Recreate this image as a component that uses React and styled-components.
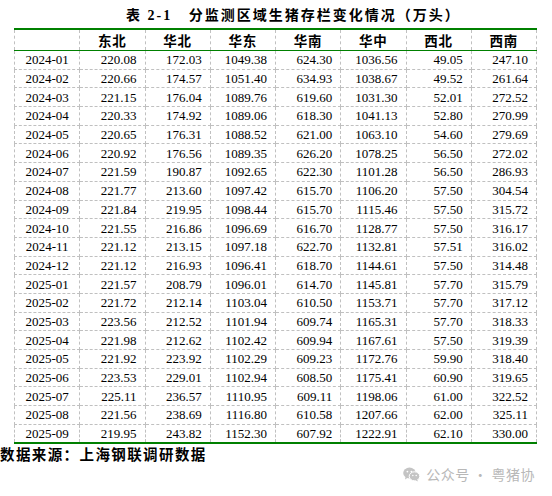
import React from 'react';
import styled, {createGlobalStyle} from 'styled-components';

const GlobalStyle = createGlobalStyle`
  html, body {
    margin: 0;
    padding: 0;
    background: #fff;
  }
  body {
    font-family: "Liberation Serif", "Noto Sans CJK SC", serif;
    color: #000;
  }
`;

const REGIONS = ['东北', '华北', '华东', '华南', '华中', '西北', '西南'];

const ROWS = [
  ['2024-01', '220.08', '172.03', '1049.38', '624.30', '1036.56', '49.05', '247.10'],
  ['2024-02', '220.66', '174.57', '1051.40', '634.93', '1038.67', '49.52', '261.64'],
  ['2024-03', '221.15', '176.04', '1089.76', '619.60', '1031.30', '52.01', '272.52'],
  ['2024-04', '220.33', '174.92', '1089.06', '618.30', '1041.13', '52.80', '270.99'],
  ['2024-05', '220.65', '176.31', '1088.52', '621.00', '1063.10', '54.60', '279.69'],
  ['2024-06', '220.92', '176.56', '1089.35', '626.20', '1078.25', '56.50', '272.02'],
  ['2024-07', '221.59', '190.87', '1092.65', '622.30', '1101.28', '56.50', '286.93'],
  ['2024-08', '221.77', '213.60', '1097.42', '615.70', '1106.20', '57.50', '304.54'],
  ['2024-09', '221.84', '219.95', '1098.44', '615.70', '1115.46', '57.50', '315.72'],
  ['2024-10', '221.55', '216.86', '1096.69', '616.70', '1128.77', '57.50', '316.17'],
  ['2024-11', '221.12', '213.15', '1097.18', '622.70', '1132.81', '57.51', '316.02'],
  ['2024-12', '221.12', '216.93', '1096.41', '618.70', '1144.61', '57.50', '314.48'],
  ['2025-01', '221.57', '208.79', '1096.01', '614.70', '1145.81', '57.70', '315.79'],
  ['2025-02', '221.72', '212.14', '1103.04', '610.50', '1153.71', '57.70', '317.12'],
  ['2025-03', '223.56', '212.52', '1101.94', '609.74', '1165.31', '57.70', '318.33'],
  ['2025-04', '221.98', '212.62', '1102.42', '609.94', '1167.61', '57.50', '319.39'],
  ['2025-05', '221.92', '223.92', '1102.29', '609.23', '1172.76', '59.90', '318.40'],
  ['2025-06', '223.53', '229.01', '1102.94', '608.50', '1175.41', '60.90', '319.65'],
  ['2025-07', '225.11', '236.57', '1110.95', '609.11', '1198.06', '61.00', '322.52'],
  ['2025-08', '221.56', '238.69', '1116.80', '610.58', '1207.66', '62.00', '325.11'],
  ['2025-09', '219.95', '243.82', '1152.30', '607.92', '1222.91', '62.10', '330.00']
];

const Page = styled.div`
  width: 552px;
  height: 496px;
  overflow: hidden;
  display: flex;
  flex-direction: column;
`;

const Title = styled.h1`
  margin: 0;
  height: 28px;
  padding-left: 126px;
  display: flex;
  align-items: center;
  font-size: 14px;
  font-weight: bold;
  letter-spacing: 2px;
  white-space: pre;
`;

const Table = styled.table`
  margin-left: 14px;
  width: 523px;
  border-collapse: collapse;
  table-layout: fixed;
  border-top: 2px solid #008000;
  border-bottom: 2px solid #008000;
`;

const HeadCell = styled.th`
  height: 18px;
  padding: 0;
  font-size: 13.5px;
  font-weight: bold;
  letter-spacing: 1px;
  text-align: center;
  border-left: 1px dashed #c0c0c0;
  border-right: 1px dashed #c0c0c0;
  border-bottom: 1.5px solid #008000;
`;

const Cell = styled.td`
  height: 17.7px;
  padding: 0 ${props => (props.$date ? '0' : '8px')} 0 0;
  font-size: 13px;
  line-height: 1;
  text-align: ${props => (props.$date ? 'center' : 'right')};
  border: 1px dashed #c0c0c0;
  border-top: ${props => (props.$first ? 'none' : '1px dashed #c0c0c0')};
`;

const Footer = styled.div`
  height: 18px;
  display: flex;
  align-items: center;
  font-size: 14.5px;
  font-weight: bold;
  letter-spacing: 1.4px;
`;

const Watermark = styled.div`
  display: flex;
  justify-content: flex-end;
  align-items: center;
  gap: 6px;
  padding-right: 17px;
  height: 24px;
  color: #b8b8b8;
  font-family: "Noto Sans CJK SC", sans-serif;
  font-size: 14px;
  letter-spacing: 0.5px;
`;

const WeChatIcon = () => (
  <svg width="17" height="15" viewBox="0 0 17 15" fill="#c4c4c4">
    <ellipse cx="6.5" cy="6" rx="6.3" ry="5.4" />
    <path d="M2.6 9.6 L2 12.4 L5 10.6 Z" />
    <ellipse cx="11.5" cy="9.3" rx="5.3" ry="4.5" fill="#c4c4c4" stroke="#fff" strokeWidth="1" />
    <path d="M14 12.6 L15.2 14.6 L12.2 13.3 Z" />
    <circle cx="4.4" cy="4.6" r="0.9" fill="#fff" />
    <circle cx="8.4" cy="4.6" r="0.9" fill="#fff" />
    <circle cx="9.8" cy="8.5" r="0.75" fill="#fff" />
    <circle cx="13.2" cy="8.5" r="0.75" fill="#fff" />
  </svg>
);

export default function App() {
  return (
    <Page>
      <GlobalStyle />
      <Title>{'表 2-1   分监测区域生猪存栏变化情况（万头）'}</Title>
      <Table>
        <thead>
          <tr>
            <HeadCell />
            {REGIONS.map(r => (
              <HeadCell key={r}>{r}</HeadCell>
            ))}
          </tr>
        </thead>
        <tbody>
          {ROWS.map((row, i) => (
            <tr key={row[0]}>
              {row.map((v, j) => (
                <Cell key={j} $date={j === 0} $first={i === 0}>
                  {v}
                </Cell>
              ))}
            </tr>
          ))}
        </tbody>
      </Table>
      <Footer>数据来源：上海钢联调研数据</Footer>
      <Watermark>
        <WeChatIcon />
        <span>公众号 · 粤猪协</span>
      </Watermark>
    </Page>
  );
}
